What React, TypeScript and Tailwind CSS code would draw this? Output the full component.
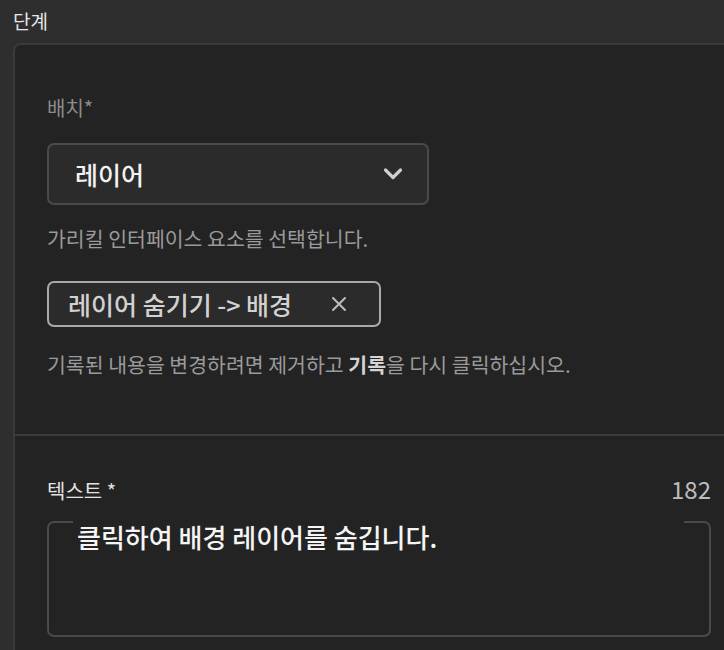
export default function App() {
  return (
    <div
      className="min-h-[650px] w-[724px] overflow-hidden bg-[#2e2e2e] pl-[13px]"
      style={{ fontFamily: '"Noto Sans CJK KR", "Noto Sans", sans-serif' }}
    >
      <h1 className="pt-[8px] text-[19px] leading-[26px] text-[#e6e6e6]">단계</h1>

      <div className="mt-[9px] -mr-[20px] min-h-[620px] rounded-tl-[8px] border-l-2 border-t-2 border-[#3a3a3a] bg-[#232323]">
        <section className="pl-[32px] pr-[40px] pt-[51px] pb-[58px]">
          <div className="text-[20px] leading-[24px] text-[#8c8c8c]">배치*</div>

          <button className="mt-[23px] flex h-[62px] w-[382px] items-center justify-between rounded-[7px] border-2 border-[#4a4a4a] bg-[#2b2b2b] pl-[26px] pr-[24px]">
            <span className="text-[25px] font-medium leading-[30px] text-[#f2f2f2]">레이어</span>
            <svg width="20" height="14" viewBox="0 0 20 14" fill="none">
              <path d="M2.5 3 L10 10.5 L17.5 3" stroke="#cfcfcf" strokeWidth="3.2" strokeLinecap="round" strokeLinejoin="round" />
            </svg>
          </button>

          <p className="mt-[21px] text-[20.5px] leading-[24px] text-[#9a9a9a]">가리킬 인터페이스 요소를 선택합니다.</p>

          <div className="mt-[31px] flex h-[46px] w-[334px] items-center rounded-[7px] border-2 border-[#a9a9a9] bg-[#2b2b2b] pl-[19px]">
            <span className="text-[25px] font-medium leading-[30px] text-[#d2d2d2]">레이어 숨기기 -&gt; 배경</span>
            <svg className="ml-[39px]" width="16" height="16" viewBox="0 0 16 16" fill="none">
              <path d="M2 2 L14 14 M14 2 L2 14" stroke="#bdbdbd" strokeWidth="2" strokeLinecap="round" />
            </svg>
          </div>

          <p className="mt-[25px] text-[20.5px] leading-[24px] text-[#9a9a9a]">
            기록된 내용을 변경하려면 제거하고 <b className="font-bold text-[#d4d4d4]">기록</b>을 다시 클릭하십시오.
          </p>
        </section>

        <section className="border-t-2 border-[#3b3b3b] pl-[32px] pr-[33px] pt-[39px]">
          <div className="flex items-end justify-between">
            <span className="text-[20px] leading-[24px] text-[#e2e2e2]">텍스트 *</span>
            <span className="text-[24px] leading-[28px] text-[#bdbdbd]">182</span>
          </div>

          <div className="mt-[18px] h-[116px] w-[664px] rounded-[7px] border-2 border-[#4a4a4a] bg-[#232323]">
            <div className="-mt-[2px] ml-[24px] mr-[25px] bg-[#232323] pl-[4px] text-[26px] font-medium leading-[32px] text-[#f5f5f5]">
              클릭하여 배경 레이어를 숨깁니다.
            </div>
          </div>
        </section>
      </div>
    </div>
  );
}
